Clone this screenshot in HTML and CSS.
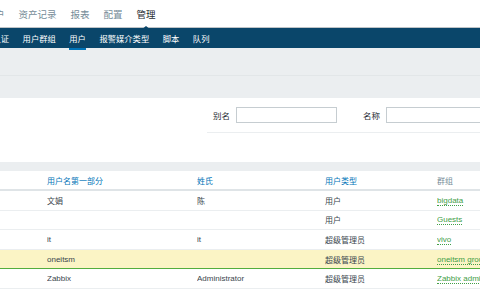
FILE: index.html
```html
<!DOCTYPE html>
<html>
<head>
	<meta charset="utf-8">
	<link rel="stylesheet" href="styles.css">
</head>
<body>
<div class="top-nav">
   <a class="first">用户</a>
   <a>资产记录</a>
   <a>报表</a>
   <a>配置</a>
   <a class="selected">管理</a>
</div>
<div class="sub-nav">
   <a class="first">认证</a>
   <a>用户群组</a>
   <a class="selected">用户</a>
   <a>报警媒介类型</a>
   <a>脚本</a>
   <a>队列</a>
</div>
<div class="header">
   <div class="header-top"></div>
</div>
<div class="filter">
   <div class="filter-form">
      <label for="alias">别名</label>
      <input type="text" id="alias">
      <label for="name" class="second">名称</label>
      <input type="text" id="name">
   </div>
</div>
<div class="list">
   <table>
      <thead>
         <tr>
            <th class="c0"></th>
            <th class="c1">用户名第一部分</th>
            <th class="c2">姓氏</th>
            <th class="c3">用户类型</th>
            <th class="c4 plain">群组</th>
         </tr>
      </thead>
      <tbody>
         <tr>
            <td></td><td>文娟</td><td>陈</td><td>用户</td>
            <td><a class="green">bigdata</a></td>
         </tr>
         <tr>
            <td></td><td></td><td></td><td>用户</td>
            <td><a class="green">Guests</a></td>
         </tr>
         <tr>
            <td></td><td>it</td><td>it</td><td>超级管理员</td>
            <td><a class="green">vivo</a></td>
         </tr>
         <tr class="highlight">
            <td></td><td>oneitsm</td><td></td><td>超级管理员</td>
            <td><a class="green">oneitsm group</a></td>
         </tr>
         <tr>
            <td></td><td>Zabbix</td><td>Administrator</td><td>超级管理员</td>
            <td><a class="green">Zabbix administrators</a></td>
         </tr>
      </tbody>
   </table>
</div>
</body>
</html>
```

FILE: styles.css
```css
body {
   margin: 0;
   background: #ebeef0;
   font-family: "Liberation Sans", "Noto Sans CJK SC", sans-serif;
   color: #1f2c33;
   overflow: hidden;
}

a {
   white-space: nowrap;
}

.top-nav {
   display: flex;
   height: 27px;
   align-items: center;
   background: #fff;
   border-bottom: 1px solid #bfc4c7;
   font-size: 9.5px;
   white-space: nowrap;
}

.top-nav a {
   color: #768d99;
   margin-right: 14px;
   position: relative;
}

.top-nav a.first {
   margin-left: -14.5px;
}

.top-nav a.selected {
   color: #1f2c33;
}

.top-nav a.selected::after {
   content: "";
   position: absolute;
   left: 50%;
   bottom: -9px;
   margin-left: -5px;
   border: 5px solid transparent;
   border-top: 0;
   border-bottom: 4px solid #0a466a;
}

.sub-nav {
   display: flex;
   height: 20px;
   align-items: center;
   background: #0a466a;
   font-size: 8.3px;
   white-space: nowrap;
}

.sub-nav a {
   color: #fff;
   margin-right: 13.5px;
   position: relative;
}

.sub-nav a.first {
   margin-left: -7.5px;
}

.sub-nav a.selected::after {
   content: "";
   position: absolute;
   left: 0;
   right: 0;
   bottom: -6px;
   height: 2px;
   background: #0275b8;
}

.header {
   height: 50px;
}

.header-top {
   height: 27px;
   border-bottom: 1px solid #e2e6e8;
}

.filter {
   height: 64px;
   background: #fff;
   margin-bottom: 9px;
}

.filter-form {
   display: flex;
   align-items: center;
   margin-left: 207px;
   height: 34px;
   border-bottom: 1px solid #ebeef0;
   font-size: 8.5px;
   white-space: nowrap;
}

.filter-form label {
   margin: 0 6px;
   flex-shrink: 0;
   color: #1f2c33;
}

.filter-form label.second {
   margin-left: 26px;
}

.filter-form input {
   width: 101px;
   height: 16px;
   box-sizing: border-box;
   border: 1px solid #c6cdd1;
   padding: 0 4px;
   margin: 0;
   flex-shrink: 0;
}

.list {
   background: #fff;
   padding-bottom: 40px;
}

table {
   border-collapse: collapse;
   table-layout: fixed;
   width: 100%;
   font-size: 8px;
}

th {
   text-align: left;
   font-weight: normal;
   color: #0275b8;
   height: 18px;
   padding: 0;
   border-bottom: 2px solid #dfe4e7;
}

th.plain {
   color: #768d99;
}

.c0 { width: 47px; }
.c1 { width: 150px; }
.c2 { width: 128px; }
.c3 { width: 112px; }

td {
   height: 18.6px;
   padding: 0;
   border-bottom: 1px solid #ebeef0;
   white-space: nowrap;
   overflow: hidden;
   color: #3a464d;
}

tr.highlight td {
   background: #fbf4c5;
   border-top: 1px solid #54ad3e;
   border-bottom: 1px solid #54ad3e;
}

a.green {
   color: #429e47;
   border-bottom: 1px dotted #429e47;
}
```
